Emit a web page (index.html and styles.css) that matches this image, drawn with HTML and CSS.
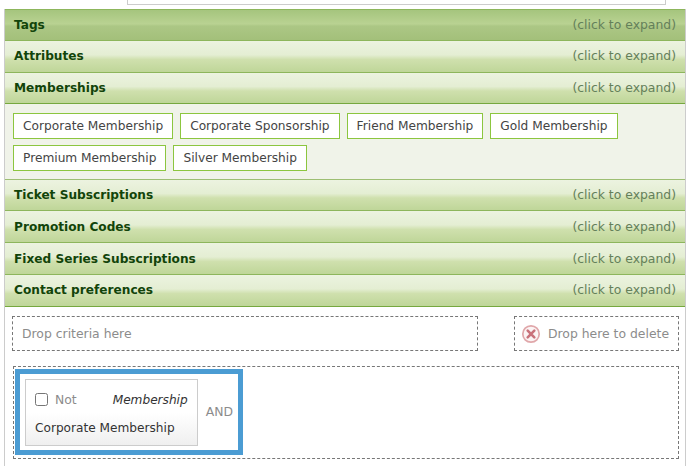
FILE: index.html
```html
<!DOCTYPE html>
<html lang="en">
<head>
    <meta charset="UTF-8">
    <meta name="viewport" content="width=device-width, initial-scale=1.0">
    <title>Criteria Builder</title>
    <link rel="stylesheet" href="styles.css">
</head>
<body>
    <div class="top-box"></div>

    <div class="panel">
        <div class="accordion">
            <div class="acc-header active"><span class="acc-title">Tags</span><span class="acc-hint">(click to expand)</span></div>
            <div class="acc-header"><span class="acc-title">Attributes</span><span class="acc-hint">(click to expand)</span></div>
            <div class="acc-header open"><span class="acc-title">Memberships</span><span class="acc-hint">(click to expand)</span></div>
            <div class="acc-content">
                <span class="chip">Corporate Membership</span>
                <span class="chip">Corporate Sponsorship</span>
                <span class="chip">Friend Membership</span>
                <span class="chip">Gold Membership</span>
                <span class="chip">Premium Membership</span>
                <span class="chip">Silver Membership</span>
            </div>
            <div class="acc-header"><span class="acc-title">Ticket Subscriptions</span><span class="acc-hint">(click to expand)</span></div>
            <div class="acc-header"><span class="acc-title">Promotion Codes</span><span class="acc-hint">(click to expand)</span></div>
            <div class="acc-header"><span class="acc-title">Fixed Series Subscriptions</span><span class="acc-hint">(click to expand)</span></div>
            <div class="acc-header open"><span class="acc-title">Contact preferences</span><span class="acc-hint">(click to expand)</span></div>
        </div>

        <div class="drop-row">
            <div class="drop-zone criteria">Drop criteria here</div>
            <div class="drop-zone trash">
                <svg class="trash-icon" width="20" height="20" viewBox="0 0 20 20">
                    <circle cx="10" cy="10" r="8.2" fill="#fbf4f4" stroke="#e0a7aa" stroke-width="1.7"/>
                    <path d="M6.7 6.7 13.3 13.3M13.3 6.7 6.7 13.3" stroke="#c9727b" stroke-width="2.6" stroke-linecap="round"/>
                </svg>
                Drop here to delete
            </div>
        </div>

        <div class="rule-area">
            <div class="highlight">
                <div class="rule-card">
                    <div class="rule-top">
                        <label class="not-label"><input type="checkbox" class="not-check"> Not</label>
                        <em class="rule-type">Membership</em>
                    </div>
                    <div class="rule-name">Corporate Membership</div>
                </div>
                <span class="and-label">AND</span>
            </div>
        </div>
    </div>
</body>
</html>
```

FILE: styles.css
```css
html, body {
    margin: 0;
    padding: 0;
    height: 466px;
    overflow: hidden;
    background: #fff;
}

body {
    font-family: "DejaVu Sans", Verdana, sans-serif;
    font-size: 12.4px;
    color: #333;
}

.top-box {
    width: 537px;
    height: 4px;
    margin-left: 127px;
    border: 1px solid #ccc;
    border-top: none;
    background: #fff;
}

.panel {
    width: 680px;
    height: 457px;
    margin: 4px 0 0 4px;
    border-left: 1px solid #ccc;
    border-right: 1px solid #ccc;
}

.acc-header {
    display: flex;
    justify-content: space-between;
    align-items: baseline;
    box-sizing: border-box;
    height: 31.75px;
    padding: 7.6px 9px 0 9px;
    line-height: 15px;
    border-bottom: 1px solid #8db65c;
    background: linear-gradient(#ecf3e0 0%, #e4eed3 45%, #cfe0ad 60%, #bfd699 100%);
}

.acc-header.active {
    box-shadow: inset 0 1px 0 #8db65c;
    background: linear-gradient(#a4c47c 0%, #b9d292 48%, #acc785 55%, #a3c07a 100%);
}

.acc-header.open {
    border-bottom-color: #76a83f;
}

.acc-title {
    font-size: 12.15px;
    font-weight: bold;
    color: #12440a;
}

.acc-hint {
    color: #64805a;
}

.acc-content {
    display: flex;
    flex-wrap: wrap;
    align-content: flex-start;
    gap: 6px 7px;
    box-sizing: border-box;
    height: 75.25px;
    padding: 8.75px 8px 0;
    border-bottom: 1px solid #9dbe73;
    background: #f0f3e9;
}

.chip {
    box-sizing: border-box;
    height: 26px;
    padding: 0 9px;
    font-size: 12.2px;
    line-height: 24px;
    border: 1px solid #8cc63f;
    background: #fff;
    color: #444;
}

.drop-row {
    display: flex;
    justify-content: space-between;
    padding: 9.5px 6px 0 7px;
}

.drop-zone {
    box-sizing: border-box;
    height: 35px;
    line-height: 33px;
    border: 1px dashed #777;
    color: #8c8c8c;
}

.criteria {
    width: 466px;
    padding-left: 9px;
}

.trash {
    display: flex;
    align-items: center;
    gap: 7px;
    width: 165px;
    padding-left: 6px;
}

.rule-area {
    box-sizing: border-box;
    width: 666px;
    height: 93px;
    margin: 15px 0 0 8px;
    padding: 2px 1px;
    border: 1px dashed #777;
}

.highlight {
    display: flex;
    align-items: center;
    gap: 8px;
    box-sizing: border-box;
    width: 228px;
    height: 86px;
    padding: 0 5px;
    border: 5px solid #4b9cd3;
    background: #fff;
}

.rule-card {
    box-sizing: border-box;
    width: 173px;
    height: 67px;
    padding: 0 9px;
    border: 1px solid #ccc;
    background: linear-gradient(#fff 50%, #efefef 100%);
}

.rule-top {
    display: flex;
    justify-content: space-between;
    align-items: center;
    height: 39px;
    line-height: 15px;
}

.not-label {
    display: flex;
    align-items: center;
    gap: 7px;
    color: #8c8c8c;
}

.not-check {
    width: 13px;
    height: 13px;
    margin: 0;
}

.rule-type {
    padding-top: 2px;
    font-size: 12.15px;
    color: #333;
}

.rule-name {
    font-size: 12.15px;
    line-height: 18px;
    color: #333;
}

.and-label {
    margin-bottom: 2px;
    color: #8c8c8c;
}
```
